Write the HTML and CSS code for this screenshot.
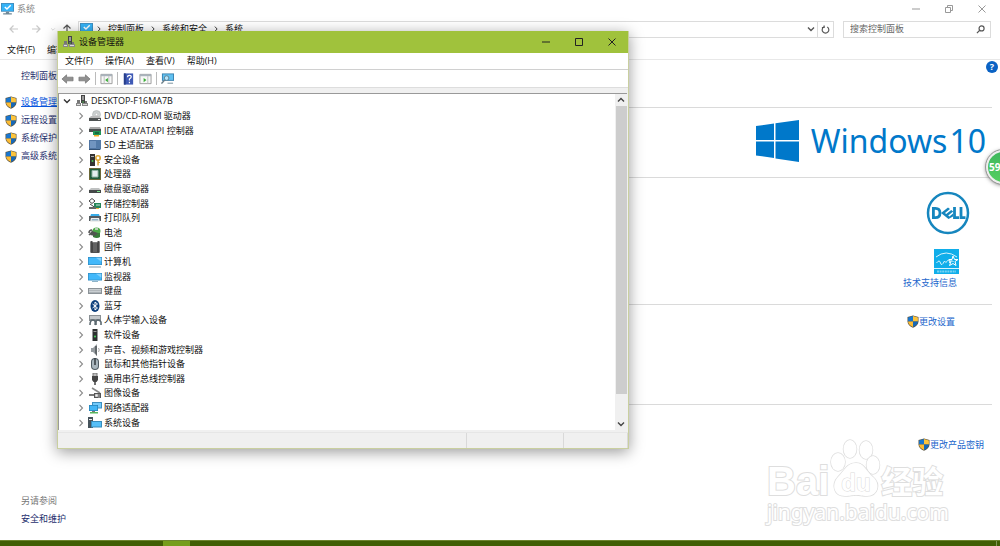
FILE: index.html
```html
<!DOCTYPE html>
<html lang="zh-CN">
<head>
<meta charset="utf-8">
<title>系统</title>
<link rel="stylesheet" href="styles.css">
</head>
<body>
<svg class="defs" aria-hidden="true">
  <symbol id="shield" viewBox="0 0 12 13"><path d="M6 .4 11.500 2v4.500c0 3-2.500 5-5.500 6.200C3 11.500.5 9.500.5 6.500V2z" fill="#5b5440"/><path d="M6 1.100V6.500H1.100V2.400z" fill="#1976cf"/><path d="M6 1.100l4.900 1.300v4.100H6z" fill="#fdc43c"/><path d="M1.100 6.500H6v5.500C3.200 10.900 1.100 9 1.100 6.500z" fill="#fdbb32"/><path d="M10.900 6.500H6v5.500c2.800-1.100 4.900-3 4.900-5.500z" fill="#1668b8"/></symbol>
  <symbol id="system" viewBox="0 0 12 11"><path d="M0 0h12v8H0z" fill="#3f86b5"/><path d="M.7.7h10.600v6.600H.7z" fill="#35b3f7"/><path d="m3.500 3.600 2 2L9 2" fill="none" stroke="#fff" stroke-width="1.300"/><path d="M4.500 8h3v1.500H10v1H2v-1h2.500z" fill="#6f8796"/></symbol>
  <symbol id="chev" viewBox="0 0 8 8"><path d="m2.500.8 3 3.200-3 3.200" fill="none" stroke="currentColor" stroke-width="1.100"/></symbol>
  <symbol id="down" viewBox="0 0 8 8"><path d="M1 2.500 4 5.500l3-3" fill="none" stroke="currentColor" stroke-width="1.400"/></symbol>
  <symbol id="tower" viewBox="0 0 14 12"><path d="M6 0h4v8H6z" fill="#444"/><path d="M7 1h2v4H7z" fill="#999"/><path d="M2 5h3v4H2zM10 6h2v3h-2z" fill="#777"/><path d="M1 8h5v3H1zM7 8h6v3H7z" fill="#888"/><path d="M2 9h3v1H2zM8 9h4v1H8z" fill="#ddd"/><circle cx="8" cy="7" r=".7" fill="#55d65a"/></symbol>
  <symbol id="dvd" viewBox="0 0 14 12"><circle cx="8.500" cy="4.500" r="4" fill="#ccd0d0" stroke="#a3a8a8" stroke-width=".5"/><circle cx="8.500" cy="4.500" r="1.200" fill="#fff" stroke="#999" stroke-width=".4"/><path d="m3 6h8l2 2H1z" fill="#bbb"/><path d="M1 8h12v3H1z" fill="#4e5252"/><path d="M10 9h2v1h-2z" fill="#eee"/></symbol>
  <symbol id="ide" viewBox="0 0 14 12"><path d="m2 2h10l1 2H1z" fill="#aaa"/><path d="M1 4h12v3H1z" fill="#4b5050"/><path d="M5 6h8v4H5z" fill="#229657"/><path d="M7 7h4v2H7z" fill="#146b40"/><path d="M6 10h5v1.500H6z" fill="#f3ae29"/></symbol>
  <symbol id="sd" viewBox="0 0 14 12"><path d="M1 1h10v10H1z" fill="#5075a3"/><path d="M2 2h8v7H2z" fill="#7195c0"/><path d="M8 1h5v9l-1 1H8z" fill="#537ba9"/><path d="M1 10h11v1H1z" fill="#345376"/></symbol>
  <symbol id="security" viewBox="0 0 14 12"><path d="M2 0h5v12H2z" fill="#333"/><path d="M3 2h3v1H3z" fill="#aaa"/><circle cx="4.500" cy="7" r="1" fill="#4ac653"/><circle cx="10" cy="4" r="2.200" fill="none" stroke="#dba838" stroke-width="1.600"/><path d="M9.300 6h1.500v5.500H9.300zM10 8h2v1h-2z" fill="#dba838"/></symbol>
  <symbol id="cpu" viewBox="0 0 14 12"><path d="M1 0h12v12H1z" fill="#8b6e38"/><path d="M1.700.7h10.600v10.600H1.700z" fill="#205c39"/><path d="M4 2.500h6v6.500H4z" fill="#e5eeee" stroke="#91b3a4"/></symbol>
  <symbol id="disk" viewBox="0 0 14 12"><path d="m3 5h8l2 2H1z" fill="#bfc1c1"/><path d="M1 7h12v3H1z" fill="#454949"/><path d="M9 8h3v1H9z" fill="#7de690"/></symbol>
  <symbol id="storage" viewBox="0 0 14 12"><path d="m1 3 3-2.500L7 3 4 5.500z" fill="#fff" stroke="#444"/><path d="m2 6 5 3.500" stroke="#444"/><path d="M6 5h7v5H6z" fill="#27865a"/><path d="M8 6h4v2H8z" fill="#77b69b"/><path d="M1 9h7v2H1z" fill="#666"/><path d="M8 10h3v1H8z" fill="#f1b345"/></symbol>
  <symbol id="printer" viewBox="0 0 14 12"><path d="M3 2h8l1 3H2z" fill="#37ace9"/><path d="M1 4h12v5H1z" fill="#545b60"/><path d="M3 6h8l1 4H2z" fill="#eee"/><path d="M4 7h6l.5 1.500h-7z" fill="#8db0c4"/></symbol>
  <symbol id="battery" viewBox="0 0 14 12"><path d="M4 3q-3 0-3 3M1 8l5-5" fill="none" stroke="#555" stroke-width="1.500"/><ellipse cx="8.500" cy="4" rx="4" ry="3.500" fill="#4caa48"/><path d="M5 6h7v4q-3 2-7 0z" fill="#377c39"/><path d="m4 4 6 2-3 3-5-1z" fill="#505650"/><path d="M7 2h3" stroke="#ddd" stroke-width="1.500"/></symbol>
  <symbol id="firmware" viewBox="0 0 14 12"><path d="M2.500 0h2v1.500h5V0h2v12h-9z" fill="#505050"/><path d="M2 2h10M2 4h10M2 6h10M2 8h10M2 10h10" stroke="#333" stroke-width=".7"/><path d="M5 2h4v9H5z" fill="#636363"/></symbol>
  <symbol id="computer" viewBox="0 0 14 12"><path d="M0 1h14v8H0z" fill="#328dc4"/><path d="M.7 1.700h12.600v6.600H.7z" fill="#42b8fa"/><path d="M8 1.700h5.300v4z" fill="#83d1fd"/><path d="M1 10.500h12v1H1z" fill="#8297a5"/></symbol>
  <symbol id="monitor" viewBox="0 0 14 12"><path d="M0 2h14v7.500H0z" fill="#328dc4"/><path d="M.7 2.700h12.600v6H.7z" fill="#42b8fa"/><path d="M8 2.700h5.300v4z" fill="#83d1fd"/><path d="M4 10h6v1H4z" fill="#8fb4c8"/></symbol>
  <symbol id="keyboard" viewBox="0 0 14 12"><path d="M0 3h14v6H0z" fill="#8b9297"/><path d="M1 4h12v3.500H1z" fill="#c9ced1"/><path d="M1 5.500h12" stroke="#9ba1a5" stroke-width=".5"/></symbol>
  <symbol id="bluetooth" viewBox="0 0 14 12"><ellipse cx="7" cy="6" rx="4.500" ry="6" fill="#0c3e7b"/><path d="m4.500 4 5 4L7 10V2l2.500 2-5 4" fill="none" stroke="#fff"/></symbol>
  <symbol id="hid" viewBox="0 0 14 12"><path d="M1 1h12v6H1z" fill="#8a9094"/><path d="M2 2h10v3H2z" fill="#c3c7ca"/><path d="M2 11q0-5 3-5t2 5M8 11V8q0-2 2-2t3 2v3" fill="none" stroke="#5c6970" stroke-width="1.600"/></symbol>
  <symbol id="software" viewBox="0 0 14 12"><path d="M4.500 0h5v12h-5z" fill="#2d3030"/><path d="M5.500 2h3v1h-3z" fill="#999"/><circle cx="7" cy="7.500" r="1" fill="#46d45d"/></symbol>
  <symbol id="sound" viewBox="0 0 14 12"><path d="M3 4h2l4-4v12L5 8H3z" fill="#969ca0"/><path d="M7 2h2v10L7 9z" fill="#61676a"/><path d="M10.500 4q1.500 2 0 4" fill="none" stroke="#aaa"/></symbol>
  <symbol id="mouse" viewBox="0 0 14 12"><rect x="3" y="0" width="8" height="12" rx="4" fill="#4e5a62"/><rect x="4" y="1" width="6" height="10" rx="3" fill="#a9b6be"/><path d="M6.200 0h1.600v7H6.200z" fill="#3a4247"/></symbol>
  <symbol id="usb" viewBox="0 0 14 12"><path d="M5 0h4v4H5z" fill="#bbb" stroke="#777"/><path d="M4 3h6v4L8.500 9h-3L4 7z" fill="#444"/><path d="M6.300 9h1.400v3H6.300z" fill="#333"/></symbol>
  <symbol id="imaging" viewBox="0 0 14 12"><path d="m4 1 8 5" stroke="#888" stroke-width="1.500"/><path d="M1 7h7v2H1z" fill="#777"/><path d="M6 6h7v5H6z" fill="#555"/><path d="M7.500 7.500h2v2h-2zM11 7v4" fill="#eee" stroke="#eee" stroke-width=".6"/></symbol>
  <symbol id="network" viewBox="0 0 14 12"><path d="M4 0h10v6.500H4z" fill="#3c8fc1"/><path d="M5 1h8v4.500H5z" fill="#73cafa"/><path d="M1 3h9v6H1z" fill="#267fb4"/><path d="M1.700 3.700h7.600v4.600H1.700z" fill="#41b5f5"/><path d="M4 9h3v1H4z" fill="#777"/><path d="M2 10h8v1.500H2z" fill="#56b55d"/></symbol>
  <symbol id="sysdev" viewBox="0 0 14 12"><path d="M0 0h5v11H0z" fill="#46535b"/><path d="M1 2h3v1H1z" fill="#eee"/><path d="M3 4h11v6.500H3z" fill="#378dbc"/><path d="M4 5h9v4.500H4z" fill="#56bff7"/></symbol>
  <symbol id="back" viewBox="0 0 14 12"><path d="M1 6 6 1.500V4h7v4H6v2.500z" fill="#909090" stroke="#6e6e6e" stroke-width=".7"/></symbol>
  <symbol id="panel" viewBox="0 0 14 12"><path d="M1 1h12v10H1z" fill="#f7f7f7" stroke="#999"/><path d="M1 1h12v2H1z" fill="#a9b3bc"/><path d="M4.500 3v8M9.500 3v8" stroke="#bbb"/><path d="m8.500 5-3 2.200 3 2.300z" fill="#39ad36"/></symbol>
  <symbol id="panel2" viewBox="0 0 14 12"><path d="M1 1h12v10H1z" fill="#f7f7f7" stroke="#999"/><path d="M1 1h12v2H1z" fill="#a9b3bc"/><path d="M9.500 3v8" stroke="#bbb"/><path d="m5 5 3 2.200-3 2.300z" fill="#39ad36"/></symbol>
  <symbol id="helpbook" viewBox="0 0 14 12"><path d="M2 0h10v12H2z" fill="#3e59b5"/><path d="M2 0h2v12H2z" fill="#263d88"/><path d="M6 4q0-2 2-2t2 1.700Q10 5 8 6v1.500M8 9v1.500" fill="none" stroke="#fff" stroke-width="1.300"/></symbol>
  <symbol id="scan" viewBox="0 0 14 12"><path d="M1 0h13v8H1z" fill="#3a82b0"/><path d="M2 1h11v6H2z" fill="#5fc0f1"/><circle cx="6" cy="5" r="2.500" fill="#b5e5fb" stroke="#5d7c8c"/><path d="m4 7-3.500 4" stroke="#6b7f8a" stroke-width="1.500"/><path d="M7 10h6v1H7z" fill="#718a96"/></symbol>
</svg>

<main class="system">
  <header class="title"><svg class="i12"><use href="#system"/></svg><h1>系统</h1>
    <div class="caption dim">
      <button aria-label="最小化"><svg viewBox="0 0 10 10"><path d="M1 5h8"/></svg></button>
      <button aria-label="还原"><svg viewBox="0 0 10 10"><path d="M1.500 3.500h5v5h-5zM3.500 3.500v-2h5v5h-2"/></svg></button>
      <button aria-label="关闭"><svg viewBox="0 0 10 10"><path d="m1.500 1.500 7 7m0-7-7 7"/></svg></button>
    </div>
  </header>
  <nav class="nav">
    <div class="arrows">
      <button class="faint" aria-label="后退"><svg viewBox="0 0 10 10"><path d="M9 5H1m3.500-3.500L1 5l3.500 3.500"/></svg></button>
      <button class="faint" aria-label="前进"><svg viewBox="0 0 10 10"><path d="M1 5h8M5.500 1.500 9 5 5.500 8.500"/></svg></button>
      <button class="faint tiny" aria-label="历史"><svg viewBox="0 0 10 10"><path d="m2 4 3 3 3-3"/></svg></button>
      <button aria-label="向上"><svg viewBox="0 0 10 10"><path d="M5 9V1M1.500 4.500 5 1l3.500 3.500"/></svg></button>
    </div>
    <div class="address">
      <svg class="i12"><use href="#system"/></svg>
      <svg class="i6"><use href="#chev"/></svg><span>控制面板</span>
      <svg class="i6"><use href="#chev"/></svg><span>系统和安全</span>
      <svg class="i6"><use href="#chev"/></svg><span>系统</span>
      <button class="drop" aria-label="展开"><svg class="i8"><use href="#down"/></svg></button>
      <button class="refresh" aria-label="刷新"><svg viewBox="0 0 10 10"><path d="M3 2.200A3.700 3.700 0 1 0 7 2.200M3.500.5v2.300H1"/></svg></button>
    </div>
    <form class="search"><input type="text" aria-label="搜索控制面板" placeholder="搜索控制面板"><svg viewBox="0 0 10 10"><circle cx="6.200" cy="3.800" r="2.800"/><path d="M4.200 5.800 1 9"/></svg></form>
  </nav>
  <div class="menu"><button>文件(F)</button><button>编辑(E)</button></div>
  <div class="body">
    <aside class="side">
      <a class="home" href="#">控制面板主页</a>
      <a class="task current" href="#"><svg><use href="#shield"/></svg><span>设备管理器</span></a>
      <a class="task" href="#"><svg><use href="#shield"/></svg><span>远程设置</span></a>
      <a class="task" href="#"><svg><use href="#shield"/></svg><span>系统保护</span></a>
      <a class="task" href="#"><svg><use href="#shield"/></svg><span>高级系统设置</span></a>
      <div class="also"><span>另请参阅</span><a href="#">安全和维护</a></div>
    </aside>
    <div class="info">
      <section class="s-head"></section>
      <section class="s-win">
        <svg class="flag" viewBox="0 0 43 42"><path d="M0 6 18 3.500V20H0zM19.500 3.300 43 0v20H19.500zM0 21.500h18V38L0 35.500zM19.500 21.500H43V42l-23.500-3.500z" fill="#0078ca"/></svg>
        <div class="wordmark"><span>Windows</span><span>10</span></div>
      </section>
      <section class="s-oem">
        <svg class="dell" viewBox="0 0 44 44" role="img" aria-label="DELL"><circle cx="22" cy="22" r="20" fill="none" stroke="#1686be" stroke-width="2.500"/><g fill="none" stroke="#1686be" stroke-width="2.800"><path d="M7.400 17.400h2q4.600 0 4.600 4.600t-4.600 4.600h-2z"/><path d="M28.500 16v10.600H33M35 16v10.600h4.500"/></g><path d="m15 22 7-5.500 2 1.500-5 4 1.200 1 5-4 2 1.500-5 4 1.200 1 3.600-3v3L22.500 28z" fill="#1686be"/></svg>
        <svg class="star" viewBox="0 0 25 25" role="img" aria-label="ENERGY STAR"><path d="M0 0h25v25H0z" fill="#10aeea"/><path d="M2 8Q12 0 23 8M0 19.500h25M2.500 14q3-4 4 0t4-2q1 3 3 0t2 2q2-4 4-1" fill="none" stroke="#d9f4fd"/><path d="m19 7 1.500 3.500H24l-3 2 1 4-3-2-3.500 2 1.500-4-2-2h3z" fill="none" stroke="#fff"/><path d="M3 22.500h19" stroke="#76d2f3" stroke-width="2" stroke-dasharray="2 .6"/></svg>
        <a href="#">技术支持信息</a>
      </section>
      <section class="s-set"><a href="#"><svg><use href="#shield"/></svg>更改设置</a></section>
      <section class="s-key"><a href="#"><svg><use href="#shield"/></svg>更改产品密钥</a></section>
    </div>
    <button class="help" aria-label="帮助">?</button>
  </div>
  <footer class="taskbar"><span class="app"></span><span class="peek"></span></footer>
</main>

<div class="meter">59</div>

<div class="mark">
  <div class="mark-row"><span>Bai</span>
    <svg viewBox="0 0 50 58"><g fill="#fff" stroke="#dedede" stroke-width="1.500"><ellipse cx="8" cy="23" rx="7" ry="9"/><ellipse cx="20" cy="10" rx="6.500" ry="9"/><ellipse cx="36" cy="11" rx="6.500" ry="9"/><ellipse cx="45" cy="26" rx="6.500" ry="9" transform="translate(-2 0)"/><path d="M26 24c8 0 10 8 17 14 8 7 5 19-6 19-5 0-7-1-11-1s-6 1-11 1C4 57 1 46 8 38c6-6 9-14 18-14z"/></g><text x="26" y="52" text-anchor="middle" class="du">du</text></svg>
    <span class="cn">经验</span></div>
  <div class="mark-url">jingyan.baidu.com</div>
</div>

<section class="devmgr">
  <header class="dm-title"><svg class="icon"><use href="#tower"/></svg><h2>设备管理器</h2>
    <div class="caption">
      <button aria-label="最小化"><svg viewBox="0 0 10 10"><path d="M1 5h8"/></svg></button>
      <button aria-label="最大化"><svg viewBox="0 0 10 10"><path d="M1.500 1.500h7v7h-7z"/></svg></button>
      <button aria-label="关闭"><svg viewBox="0 0 10 10"><path d="m1.500 1.500 7 7m0-7-7 7"/></svg></button>
    </div>
  </header>
  <div class="dm-menu"><button>文件(F)</button><button>操作(A)</button><button>查看(V)</button><button>帮助(H)</button></div>
  <div class="tools">
    <button aria-label="后退"><svg class="icon"><use href="#back"/></svg></button>
    <button class="flip" aria-label="前进"><svg class="icon"><use href="#back"/></svg></button><i></i>
    <button aria-label="显示控制台树"><svg class="icon"><use href="#panel"/></svg></button><i></i>
    <button aria-label="帮助"><svg class="icon"><use href="#helpbook"/></svg></button>
    <button aria-label="操作窗格"><svg class="icon"><use href="#panel2"/></svg></button><i></i>
    <button aria-label="扫描硬件"><svg class="icon"><use href="#scan"/></svg></button>
  </div>
  <div class="pane">
    <ul class="tree">
      <li class="root"><svg class="i8"><use href="#down"/></svg><svg class="icon"><use href="#tower"/></svg>DESKTOP-F16MA7B</li>
      <li><svg class="i8"><use href="#chev"/></svg><svg class="icon"><use href="#dvd"/></svg>DVD/CD-ROM 驱动器</li>
      <li><svg class="i8"><use href="#chev"/></svg><svg class="icon"><use href="#ide"/></svg>IDE ATA/ATAPI 控制器</li>
      <li><svg class="i8"><use href="#chev"/></svg><svg class="icon"><use href="#sd"/></svg>SD 主适配器</li>
      <li><svg class="i8"><use href="#chev"/></svg><svg class="icon"><use href="#security"/></svg>安全设备</li>
      <li><svg class="i8"><use href="#chev"/></svg><svg class="icon"><use href="#cpu"/></svg>处理器</li>
      <li><svg class="i8"><use href="#chev"/></svg><svg class="icon"><use href="#disk"/></svg>磁盘驱动器</li>
      <li><svg class="i8"><use href="#chev"/></svg><svg class="icon"><use href="#storage"/></svg>存储控制器</li>
      <li><svg class="i8"><use href="#chev"/></svg><svg class="icon"><use href="#printer"/></svg>打印队列</li>
      <li><svg class="i8"><use href="#chev"/></svg><svg class="icon"><use href="#battery"/></svg>电池</li>
      <li><svg class="i8"><use href="#chev"/></svg><svg class="icon"><use href="#firmware"/></svg>固件</li>
      <li><svg class="i8"><use href="#chev"/></svg><svg class="icon"><use href="#computer"/></svg>计算机</li>
      <li><svg class="i8"><use href="#chev"/></svg><svg class="icon"><use href="#monitor"/></svg>监视器</li>
      <li><svg class="i8"><use href="#chev"/></svg><svg class="icon"><use href="#keyboard"/></svg>键盘</li>
      <li><svg class="i8"><use href="#chev"/></svg><svg class="icon"><use href="#bluetooth"/></svg>蓝牙</li>
      <li><svg class="i8"><use href="#chev"/></svg><svg class="icon"><use href="#hid"/></svg>人体学输入设备</li>
      <li><svg class="i8"><use href="#chev"/></svg><svg class="icon"><use href="#software"/></svg>软件设备</li>
      <li><svg class="i8"><use href="#chev"/></svg><svg class="icon"><use href="#sound"/></svg>声音、视频和游戏控制器</li>
      <li><svg class="i8"><use href="#chev"/></svg><svg class="icon"><use href="#mouse"/></svg>鼠标和其他指针设备</li>
      <li><svg class="i8"><use href="#chev"/></svg><svg class="icon"><use href="#usb"/></svg>通用串行总线控制器</li>
      <li><svg class="i8"><use href="#chev"/></svg><svg class="icon"><use href="#imaging"/></svg>图像设备</li>
      <li><svg class="i8"><use href="#chev"/></svg><svg class="icon"><use href="#network"/></svg>网络适配器</li>
      <li><svg class="i8"><use href="#chev"/></svg><svg class="icon"><use href="#sysdev"/></svg>系统设备</li>
    </ul>
    <div class="scroll"><svg class="i8 up"><use href="#down"/></svg><div class="thumb"></div><svg class="i8"><use href="#down"/></svg></div>
  </div>
  <footer class="status"><span></span><span></span><span></span></footer>
</section>
</body>
</html>
```

FILE: styles.css
```css
* { box-sizing: border-box; }
body { margin: 0; height: 100vh; overflow: hidden; position: relative; background: #fff; color: #111; font: 9px/12px "Open Sans", "Noto Sans CJK SC", sans-serif; }
button { border: 0; padding: 0; background: none; font: inherit; color: inherit; display: flex; align-items: center; justify-content: center; }
h1, h2 { margin: 0; font: inherit; }
svg { display: block; flex: none; }
a { color: #1a66cc; text-decoration: none; }
.defs { position: absolute; width: 0; height: 0; }
.i12 { width: 13px; height: 12px; }
.i8 { width: 8px; height: 8px; }
.i6 { width: 6px; height: 6px; }
.icon { width: 14px; height: 12px; }

.system { height: 100%; display: flex; flex-direction: column; }
.title { height: 17px; display: flex; align-items: center; gap: 3px; padding-left: 1px; color: #888; }
.caption { margin-left: auto; display: flex; }
.caption button { width: 33px; height: 16px; }
.caption svg { width: 10px; height: 10px; fill: none; stroke: #222; stroke-width: 1; }
.caption.dim svg { stroke: #999; }
.caption.dim { padding-right: 2px; }

.nav { height: 24px; display: flex; align-items: center; padding: 0 9px; gap: 9px; }
.arrows { flex: none; width: 60px; display: flex; align-items: center; gap: 12px; }
.arrows svg { width: 10px; height: 10px; fill: none; stroke: #555; stroke-width: 1.2; }
.arrows .faint svg { stroke: #c8c8c8; }
.arrows .tiny svg { width: 6px; height: 6px; }
.arrows .tiny { margin: 0 -6px 0 -3px; }
.address { flex: 1; height: 17px; border: 1px solid #dcdcdc; display: flex; align-items: center; padding-left: 1px; gap: 6px; }
.address .i12 { margin-right: -3px; }
.drop { margin: 0 -4px 0 auto; color: #555; }
.refresh { width: 16px; height: 15px; border-left: 1px solid #dcdcdc; }
.refresh svg, .search svg { width: 9px; height: 9px; fill: none; stroke: #555; stroke-width: 1.3; }
.search { width: 148px; height: 17px; border: 1px solid #dcdcdc; display: flex; align-items: center; padding: 0 5px 0 6px; }
.search input { flex: 1; min-width: 0; border: 0; padding: 0; font: inherit; outline: 0; }
.search input::placeholder { color: #666; opacity: 1; }

.menu { height: 19px; display: flex; align-items: center; gap: 12px; padding-left: 7px; border-bottom: 1px solid #e8e8e8; }
.body { flex: 1; min-height: 0; display: flex; position: relative; }
.side { width: 160px; display: flex; flex-direction: column; padding: 7px 0 12px 5px; }
.side a { color: #1f2f6e; height: 18px; display: flex; align-items: center; }
.side .home { padding-left: 16px; margin-bottom: 8px; }
.task { gap: 4px; }
.task svg { width: 12px; height: 13px; }
.side .current span { color: #0a57e0; text-decoration: underline; }
.also { margin-top: auto; padding-left: 16px; display: flex; flex-direction: column; gap: 3px; color: #777; }
.info { flex: 1; margin-right: 8px; display: flex; flex-direction: column; }
.info section { border-bottom: 1px solid #dadada; }
.info a { display: flex; align-items: center; }
.info a svg { width: 12px; height: 13px; }
.info .s-head { height: 48px; }
.info .s-win { height: 70px; display: flex; align-items: center; justify-content: flex-end; gap: 12px; padding: 0 6px 4px 0; }
.flag { width: 43px; height: 42px; }
.wordmark { color: #0078ca; font: 32px/44px "Noto Sans", sans-serif; white-space: nowrap; display: flex; gap: 2px; }
.info .s-oem { height: 127px; display: flex; flex-direction: column; align-items: flex-end; padding: 13px 22px 0 0; }
.dell { width: 44px; height: 44px; }
.star { width: 25px; height: 25px; margin: 14px 11px 3px 0; }
.s-oem a { margin-right: 13px; }
.info .s-set { height: 100px; display: flex; justify-content: flex-end; align-items: flex-start; padding: 10px 37px 0 0; }
.info .s-key { border: 0; display: flex; justify-content: flex-end; align-items: flex-start; padding: 33px 8px 0 0; }
.help { position: absolute; right: 2px; top: 1px; width: 12px; height: 12px; border-radius: 50%; background: #0a62c4; color: #fff; font-weight: 700; }
.taskbar { height: 6px; background: #415f05; border-top: 1px solid #6d852f; padding-left: 163px; display: flex; justify-content: space-between; }
.app { width: 27px; background: #769e1c; }
.peek { width: 4px; border-left: 1px solid #839858; }

.meter { position: absolute; right: -20px; top: 150px; width: 34px; height: 34px; border-radius: 50%; border: 2px solid #eee; outline: 1px solid #999; background: linear-gradient(#3fb75d, #55cf60); box-shadow: 0 1px 4px #777; color: #fff; font: bold 10px/30px "Open Sans", sans-serif; padding-left: 1px; }

.mark { position: absolute; right: 53px; top: 439px; width: 180px; color: #fff; -webkit-text-stroke: 2px #dedede; paint-order: stroke fill; }
.mark-row { display: flex; align-items: flex-end; height: 58px; font: bold 40px/32px "Liberation Sans", sans-serif; }
.mark-row svg { width: 54px; height: 58px; margin: 0 -1px; }
.mark-row .cn { font: bold 31px/34px "Noto Sans CJK SC", sans-serif; }
.du { font: bold 24px "Liberation Sans", sans-serif; fill: #fff; stroke: #dadada; }
.mark-url { font: 21px/30px "Noto Sans", sans-serif; }

.devmgr { position: absolute; left: 57px; top: 31px; width: 572px; border: 1px solid #c9cf9f; border-top: 0; background: #f0f0f0; box-shadow: 0 3px 14px rgba(0, 0, 0, .4); }
.dm-title { height: 22px; background: #a0c23c; display: flex; align-items: center; padding-left: 4px; gap: 3px; }
.dm-menu { height: 17px; background: #fff; border-bottom: 1px solid #d0d0d0; display: flex; align-items: center; padding-left: 7px; gap: 12px; }
.tools { height: 18px; background: #fff; border-bottom: 1px solid #ddd; display: flex; align-items: center; padding-left: 3px; gap: 4px; }
.tools i { width: 1px; height: 13px; background: #bbb; }
.tools .icon { width: 13px; }
.flip { transform: scaleX(-1); }
.pane { margin: 5px 1px 0 0; border: 1px solid #999; border-width: 1px 0 0 1px; display: flex; background: #fff; }
.tree { flex: 1; margin: 0; padding: 0; list-style: none; height: 336px; display: grid; grid-auto-rows: 1fr; }
.tree li { display: flex; align-items: center; padding-left: 18px; min-height: 0; line-height: 12px; white-space: nowrap; }
.tree .i8 { margin-right: 3px; color: #888; }
.tree .icon { margin-right: 2px; }
.tree .root { padding-left: 4px; }
.tree .root .i8 { margin-right: 4px; color: #333; }
.scroll { width: 12px; background: #f0f0f0; display: flex; flex-direction: column; align-items: center; padding: 2px 0; gap: 2px; color: #444; }
.scroll .up { transform: scaleY(-1); }
.thumb { width: 11px; height: 288px; background: #cdcdcd; margin-bottom: auto; }
.status { margin-top: 2px; height: 16px; display: flex; border-top: 1px solid #e6e6e6; }
.status span { width: 64px; border-right: 1px solid #d9d9d9; }
.status span:first-child { flex: 1; }
.status span:nth-child(2) { width: 97px; }
```
